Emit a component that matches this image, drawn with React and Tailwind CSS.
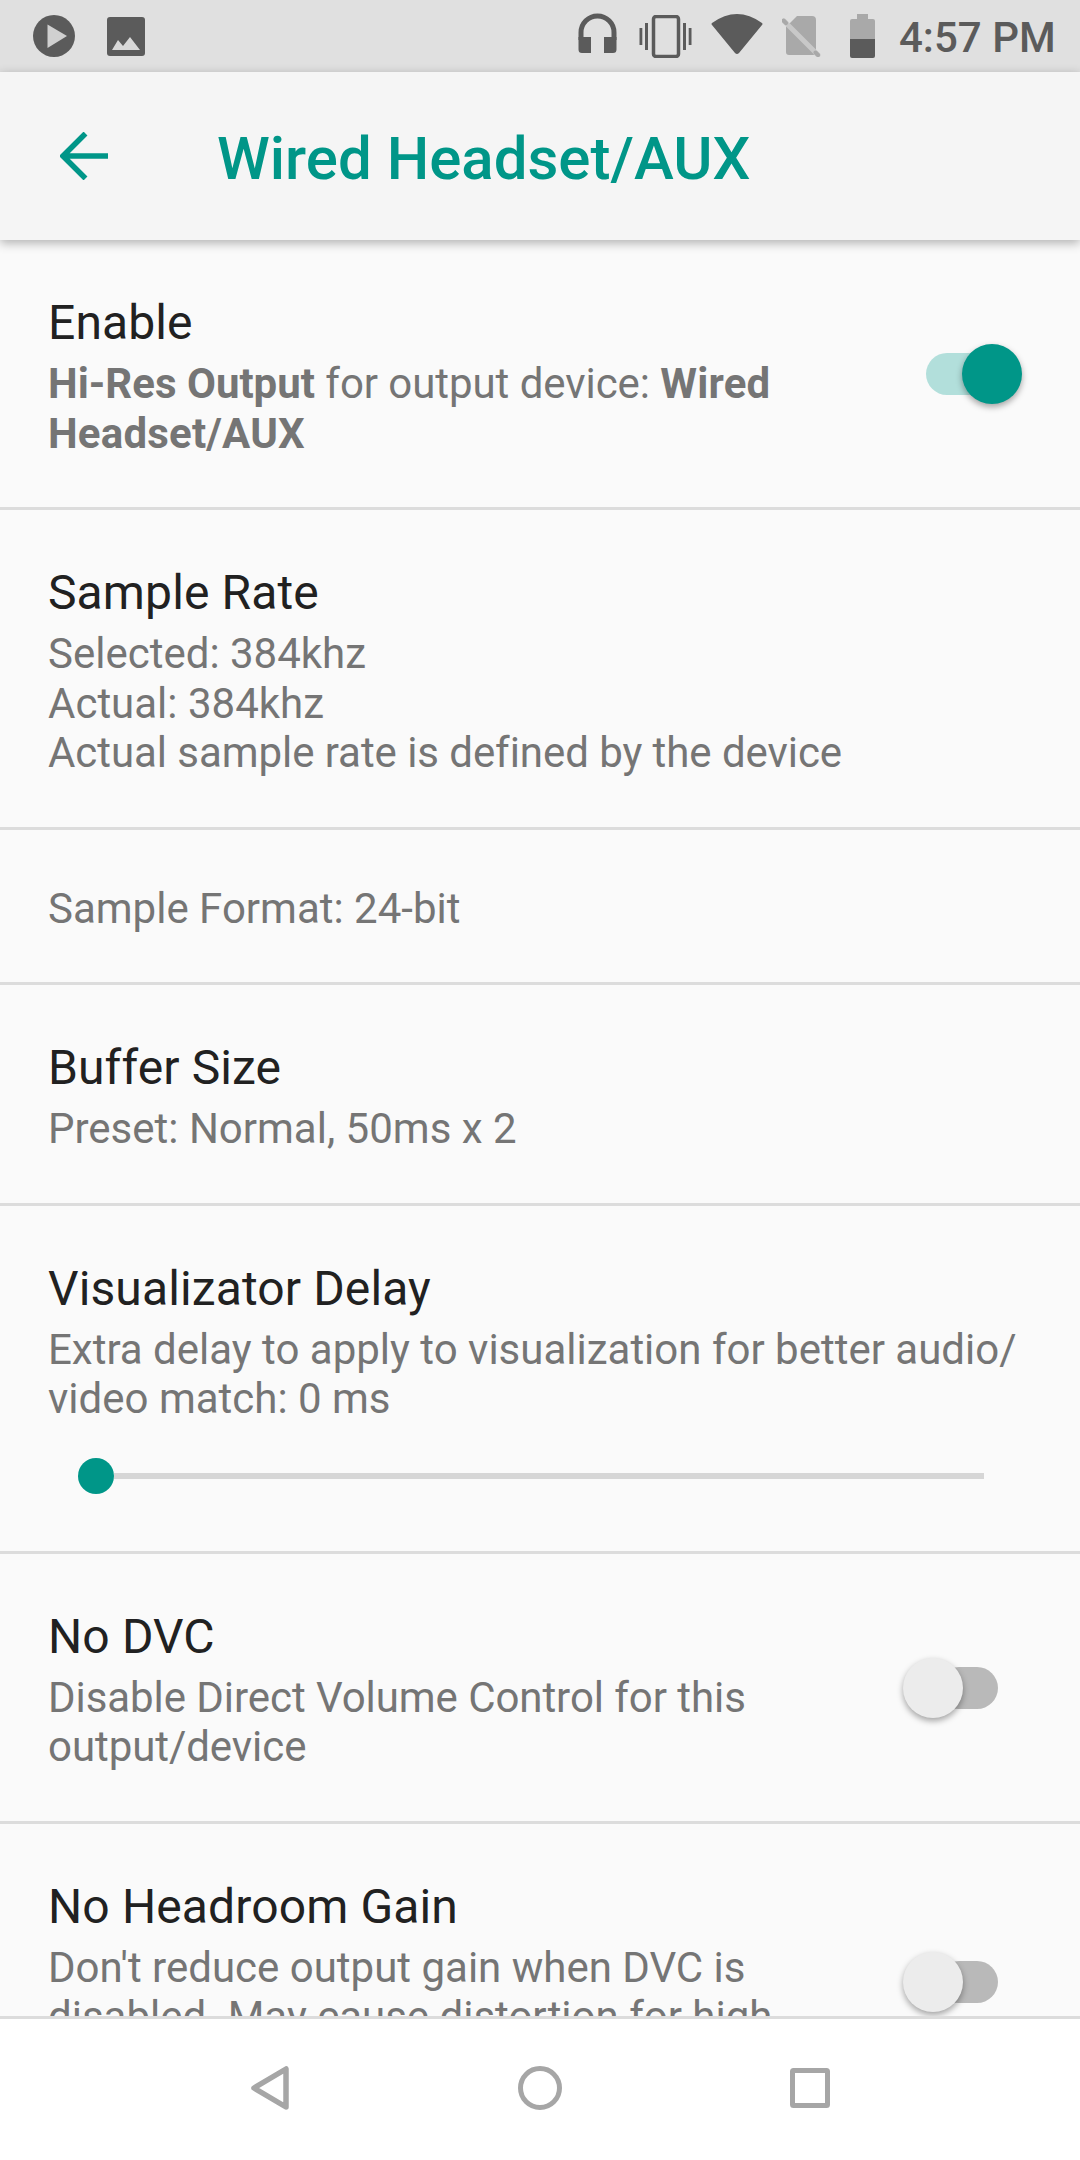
const TITLE = "mb-[6px] text-[48px] leading-[60px] tracking-[0.12px] text-[#212121]";
const SUB = "text-[42px] leading-[49.5px] text-[#757575]";
const TIGHT = "tracking-[-0.06px]";

function Switch({ on }) {
  if (on) {
    return (
      <div className="relative mb-[3px] mr-[10px] h-[60px] w-[96px] shrink-0">
        <div className="absolute left-0 top-[9px] h-[42px] w-[84px] rounded-full bg-[#b2dfdb]" />
        <div className="absolute right-0 top-0 h-[60px] w-[60px] rounded-full bg-[#009688] shadow-[0_3px_6px_rgba(0,0,0,0.35)]" />
      </div>
    );
  }
  return (
    <div className="relative mb-[3px] mr-[34px] h-[60px] w-[96px] shrink-0">
      <div className="absolute right-0 top-[9px] h-[42px] w-[60px] rounded-full bg-[#b9b9b9]" />
      <div className="absolute left-[1px] top-0 h-[60px] w-[60px] rounded-full bg-[#ececec] shadow-[0_3px_6px_rgba(0,0,0,0.35)]" />
    </div>
  );
}

function Row({ title, children, sw, extra }) {
  return (
    <div className={"flex items-center border-b-[3px] border-[#dcdcdc] pb-[49px] pl-12 pr-12 " + (title ? "pt-[53px]" : "pt-[54px]")}>
      <div className="min-w-0 flex-1">
        {title && <div className={TITLE}>{title}</div>}
        {children && <div className={SUB + " " + (sw !== undefined ? "pr-[40px]" : "")}>{children}</div>}
        {extra}
      </div>
      {sw !== undefined && <Switch on={sw} />}
    </div>
  );
}

function StatusBar() {
  const dark = "#5b5b5b";
  const light = "#a9a9a9";
  return (
    <div className="flex h-[72px] shrink-0 items-center bg-[#e0e0e0] pl-[33px] pr-[26px]">
      <svg width="42" height="42" viewBox="0 0 42 42" className="shrink-0">
        <circle cx="21" cy="21" r="21" fill={dark} />
        <path d="M14.5 9.5 L34 21 L14.5 33 Z" fill="#d0d0d0" />
      </svg>
      <svg width="38" height="39" viewBox="0 0 38 39" className="ml-[32px] shrink-0">
        <rect width="38" height="39" rx="3" fill={dark} />
        <path d="M5 33 L11 23 L16 29 L23 20 L33 33 Z" fill="#d8d8d8" />
      </svg>
      <div className="flex-1" />
      <svg width="39" height="40" viewBox="0 0 39 40" className="mb-[6px] shrink-0">
        <path d="M3 27 V19.5 A16.5 16.5 0 0 1 36 19.5 V27" fill="none" stroke={dark} strokeWidth="5" />
        <path d="M0.5 24 H13 V40 H4 Q0.5 40 0.5 36.5 Z M38.5 24 H26 V40 H35 Q38.5 40 38.5 36.5 Z" fill={dark} />
      </svg>
      <svg width="53" height="43" viewBox="0 0 53 43" className="ml-[22px] shrink-0">
        <rect x="14.5" y="1.5" width="25" height="40" rx="2.5" fill="none" stroke={dark} strokeWidth="3.5" />
        <rect x="0.5" y="13" width="2.8" height="17" fill={dark} />
        <rect x="6" y="8" width="3" height="27" fill={dark} />
        <rect x="44" y="8" width="3" height="27" fill={dark} />
        <rect x="49.7" y="13" width="2.8" height="17" fill={dark} />
      </svg>
      <svg width="52" height="41" viewBox="0 0 52 41" className="mb-[3px] ml-[19px] shrink-0">
        <path d="M1 9 Q26 -9 51 9 Q52 10 51 11 L28 39 Q26 41 24 39 L1 11 Q0 10 1 9 Z" fill={dark} />
      </svg>
      <svg width="39" height="41" viewBox="0 0 39 41" className="ml-[19px] shrink-0">
        <path d="M15 0 H30 Q34 0 34 4 V36 Q34 39 31 39 H7 Q4 39 4 36 V11 Z" fill={light} />
        <path d="M2 5 L36 39" stroke="#c8c8c8" strokeWidth="5" strokeLinecap="round" />
        <path d="M1.5 4.5 L4 7 M33.5 36.5 L36 39" stroke={light} strokeWidth="4" strokeLinecap="round" />
      </svg>
      <svg width="25" height="44" viewBox="0 0 25 44" className="ml-[29px] shrink-0">
        <path d="M7 0 H18 V5 H23 Q25 5 25 7 V25 H0 V7 Q0 5 2 5 H7 Z" fill={light} />
        <path d="M0 25 H25 V42 Q25 44 23 44 H2 Q0 44 0 42 Z" fill={dark} />
      </svg>
      <span className="ml-[24px] mt-[4px] w-[155px] whitespace-nowrap text-[42px] font-medium leading-none text-[#5b5b5b]">4:57 PM</span>
    </div>
  );
}

function Toolbar() {
  return (
    <div className="relative z-10 flex h-[168px] shrink-0 items-center bg-[#f5f5f5] pl-[60px] shadow-[0_3px_10px_rgba(0,0,0,0.3)]">
      <svg width="48" height="48" viewBox="0 0 48 48" className="shrink-0">
        <path d="M48 24 H3 M25.5 1.5 L3 24 L25.5 46.5" fill="none" stroke="#009688" strokeWidth="5.5" />
      </svg>
      <h1 className="ml-[109px] mt-[5px] text-[60px] font-medium leading-none text-[#009688]">Wired Headset/AUX</h1>
    </div>
  );
}

function Slider() {
  return (
    <div className="mb-[8px] ml-[30px] mr-[48px] mt-[34px] flex h-9 items-center">
      <div className="h-9 w-9 shrink-0 rounded-full bg-[#009688]" />
      <div className="h-[6px] flex-1 bg-[#d6d6d6]" />
    </div>
  );
}

function NavBar() {
  const c = "#a6a6a6";
  return (
    <div className="relative z-10 flex h-[144px] shrink-0 items-start border-t-[3px] border-[#dcdcdc] bg-white pl-[251px] pt-[47px]">
      <svg width="38" height="44" viewBox="0 0 38 44" className="shrink-0">
        <path d="M35 3 V41 L3 22 Z" fill="none" stroke={c} strokeWidth="5.5" strokeLinejoin="round" />
      </svg>
      <svg width="44" height="44" viewBox="0 0 44 44" className="ml-[229px] shrink-0">
        <circle cx="22" cy="22" r="19.5" fill="none" stroke={c} strokeWidth="5" />
      </svg>
      <svg width="40" height="40" viewBox="0 0 40 40" className="ml-[228px] mt-[2px] shrink-0">
        <rect x="2.5" y="2.5" width="35" height="35" rx="1" fill="none" stroke={c} strokeWidth="5" />
      </svg>
    </div>
  );
}

export default function App() {
  return (
    <div className="flex h-[2160px] w-[1080px] flex-col overflow-hidden bg-[#fafafa] font-['Roboto',sans-serif]">
      <StatusBar />
      <Toolbar />
      <div className="min-h-0 flex-1 overflow-hidden">
        <Row title="Enable" sw={true}>
          <b className="font-bold">Hi-Res Output</b><span className={TIGHT}> for output device: </span><b className="font-bold tracking-[0.2px]">Wired Headset/AUX</b>
        </Row>
        <Row title="Sample Rate">
          Selected: 384khz
          <br />
          Actual: 384khz
          <br />
          <span className={TIGHT}>Actual sample rate is defined by the device</span>
        </Row>
        <Row>Sample Format: 24-bit</Row>
        <Row title="Buffer Size">Preset: Normal, 50ms x 2</Row>
        <Row title="Visualizator Delay" extra={<Slider />}>
          <span className="whitespace-nowrap">Extra delay to apply to visualization for better audio/</span>
          <br />
          video match: 0 ms
        </Row>
        <Row title="No DVC" sw={false}>
          <span className={TIGHT}>Disable Direct Volume Control for this output/device</span>
        </Row>
        <Row title="No Headroom Gain" sw={false}>
          Don't reduce output gain when DVC is disabled. May cause distortion for high volume files
        </Row>
      </div>
      <NavBar />
    </div>
  );
}
